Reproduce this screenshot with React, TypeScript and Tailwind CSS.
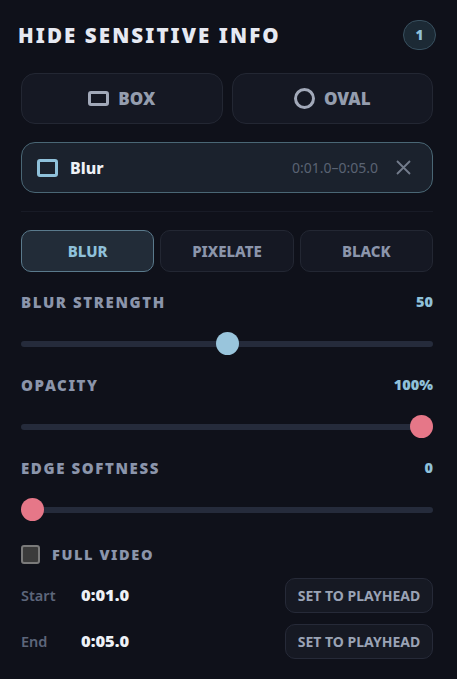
const FONT = "font-['Noto_Sans','Open_Sans',sans-serif]";

function Slider({ label, value, pct, thumb }: { label: string; value: string; pct: number; thumb: string }) {
  return (
    <div className="flex flex-col">
      <div className="flex items-center justify-between h-5">
        <span className="text-[15px] font-black tracking-[1.6px] text-[#8b95ab]">{label}</span>
        <span className="text-[14.5px] font-black text-[#8fc1da]">{value}</span>
      </div>
      <div className="relative h-[23px] mt-[20px] flex items-center">
        <div className="h-[6px] w-full rounded-full bg-[#252b3b]" />
        <div
          className={`absolute top-0 w-[23px] h-[23px] rounded-full ${thumb}`}
          style={{ left: `calc((100% - 23px) * ${pct})` }}
        />
      </div>
    </div>
  );
}

function TimeRow({ label, value }: { label: string; value: string }) {
  return (
    <div className="flex items-center h-[35px]">
      <span className="w-[60px] text-[14.5px] font-semibold text-[#5d667b]">{label}</span>
      <span className="text-[16.5px] font-black text-[#eef1f6]">{value}</span>
      <button className="ml-auto h-[35px] w-[148px] rounded-[10px] border border-[#262a38] bg-[#161923] text-[14px] font-bold text-[#9aa3b5] whitespace-nowrap">
        SET TO PLAYHEAD
      </button>
    </div>
  );
}

export default function App() {
  return (
    <div className={`${FONT} w-[457px] h-[679px] bg-[#0f111a] pl-[21px] pr-[24px] overflow-hidden`}>
      <div className="flex items-center justify-between h-[73px] pb-[3px]">
        <h1 className="-ml-[3px] text-[20.5px] font-black tracking-[2.1px] text-[#e6e9f2]">HIDE SENSITIVE INFO</h1>
        <span className="mr-[-3px] w-[33px] h-[30px] rounded-full border border-[#38505f] bg-[#1c2a35] flex items-center justify-center text-[13.5px] font-black text-[#8fc1da]">
          1
        </span>
      </div>

      <div className="flex gap-[9px]">
        <button className="flex-1 h-[51px] rounded-[14px] border border-[#232733] bg-[#151823] flex items-center justify-center gap-[9px] text-[17px] font-black text-[#949dae]">
          <span className="w-[21px] h-[15px] rounded-[3px] border-[3px] border-[#a2a9b9]" />
          BOX
        </button>
        <button className="flex-1 h-[51px] rounded-[14px] border border-[#232733] bg-[#151823] flex items-center justify-center gap-[9px] text-[17px] font-black text-[#949dae]">
          <span className="w-[21px] h-[21px] rounded-full border-[3px] border-[#a2a9b9]" />
          OVAL
        </button>
      </div>

      <div className="mt-[18px] h-[51px] rounded-[14px] border border-[#4a6775] bg-[#1b222d] flex items-center pl-[15px] pr-[21px]">
        <span className="w-[21px] h-[18px] rounded-[3px] border-[3px] border-[#8fc1da]" />
        <span className="ml-[12px] text-[16px] font-extrabold text-[#eef1f6]">Blur</span>
        <span className="ml-auto text-[14px] text-[#5a6373]">0:01.0–0:05.0</span>
        <svg className="ml-[18px]" width="15" height="15" viewBox="0 0 15 15" fill="none" stroke="#737c8c" strokeWidth="1.8">
          <path d="M1 1 L14 14 M14 1 L1 14" />
        </svg>
      </div>

      <div className="mt-[18px] h-px bg-[#181b26]" />

      <div className="mt-[18px] flex gap-[6px]">
        <button className="flex-1 h-[42px] rounded-[10px] border border-[#5a7a8c] bg-[#222c38] text-[15px] font-extrabold text-[#8fc1da]">BLUR</button>
        <button className="flex-1 h-[42px] rounded-[10px] border border-[#232733] bg-[#151823] text-[15px] font-extrabold text-[#8b95ab]">PIXELATE</button>
        <button className="flex-1 h-[42px] rounded-[10px] border border-[#232733] bg-[#151823] text-[15px] font-extrabold text-[#8b95ab]">BLACK</button>
      </div>

      <div className="mt-[20px] flex flex-col gap-[20px]">
        <Slider label="BLUR STRENGTH" value="50" pct={0.5} thumb="bg-[#99c5dc]" />
        <Slider label="OPACITY" value="100%" pct={1} thumb="bg-[#e67788]" />
        <Slider label="EDGE SOFTNESS" value="0" pct={0} thumb="bg-[#e67788]" />
      </div>

      <label className="mt-[24px] flex items-center gap-[12px] h-[19px]">
        <span className="w-[19px] h-[19px] rounded-[3px] border-2 border-[#7a7a7a] bg-[#3b3b3b]" />
        <span className="text-[14.5px] font-black tracking-[1.6px] text-[#8b95ab]">FULL VIDEO</span>
      </label>

      <div className="mt-[14px] flex flex-col gap-[11px]">
        <TimeRow label="Start" value="0:01.0" />
        <TimeRow label="End" value="0:05.0" />
      </div>
    </div>
  );
}
